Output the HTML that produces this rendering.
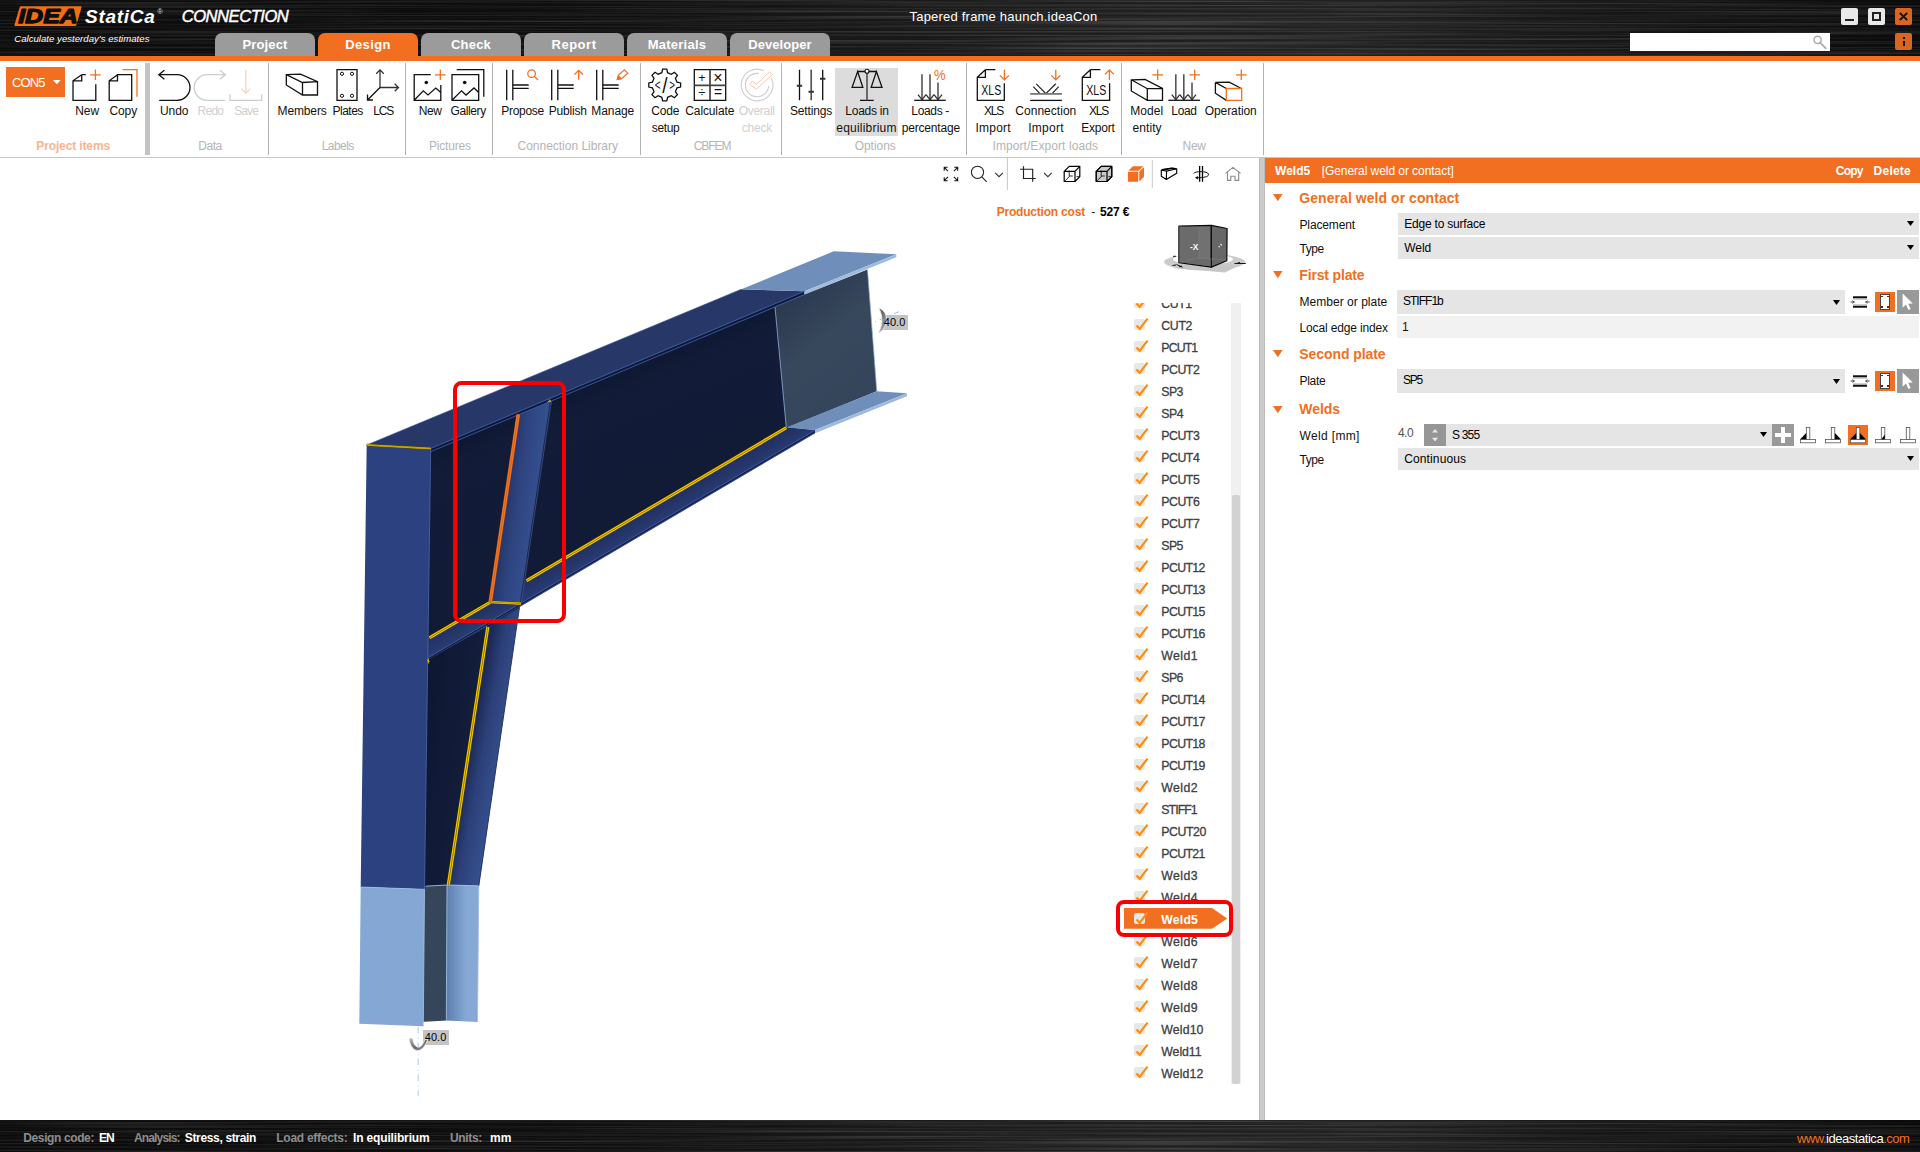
<!DOCTYPE html><html lang="en"><head><meta charset="utf-8"><title>IDEA StatiCa Connection - Tapered frame haunch.ideaCon</title><style>
html,body{margin:0;padding:0}
body{width:1920px;height:1152px;position:relative;overflow:hidden;background:#fff;font-family:"Liberation Sans",sans-serif;}
.abs,.ic,.tex,.t{position:absolute}
.abs>*{position:absolute}
.t{white-space:nowrap;display:block}
.ic{overflow:visible}
i{display:block}
</style></head><body><svg width="0" height="0" style="position:absolute"><defs>
<filter id="brush" x="0" y="0" width="100%" height="100%" color-interpolation-filters="sRGB">
<feTurbulence type="fractalNoise" baseFrequency="0.003 0.6" numOctaves="2" seed="7" result="n"></feTurbulence>
<feColorMatrix in="n" type="matrix" values="0 0 0 0 0  0 0 0 0 0  0 0 0 0 0  2.0 0 0 0 -0.8"></feColorMatrix>
<feComposite in2="SourceGraphic" operator="in" result="a"></feComposite>
<feFlood flood-color="#4e4e4e"></feFlood><feComposite in2="a" operator="in"></feComposite>
</filter></defs></svg><div id="header" class="abs" style="left:0;top:0;width:1920px;height:56px"><svg class="tex" width="1920" height="56" style="left:0;top:0"><defs><linearGradient id="hg" x1="0" x2="1" y1="0" y2="0"><stop offset="0" stop-color="#0b0b0b"></stop><stop offset="0.3" stop-color="#0f0f0f"></stop><stop offset="0.55" stop-color="#1d1d1d"></stop><stop offset="0.7" stop-color="#222"></stop><stop offset="0.86" stop-color="#141414"></stop><stop offset="1" stop-color="#0b0b0b"></stop></linearGradient><linearGradient id="hmg" x1="0" x2="1" y1="0" y2="0"><stop offset="0" stop-color="#fff" stop-opacity="0.5"></stop><stop offset="0.35" stop-color="#fff" stop-opacity="0.6"></stop><stop offset="0.6" stop-color="#fff" stop-opacity="1"></stop><stop offset="0.78" stop-color="#fff" stop-opacity="0.9"></stop><stop offset="1" stop-color="#fff" stop-opacity="0.45"></stop></linearGradient><mask id="hm" maskUnits="userSpaceOnUse" x="0" y="0" width="1920" height="56"><rect width="1920" height="56" fill="url(#hmg)"></rect></mask></defs><rect width="1920" height="56" fill="url(#hg)"></rect><g mask="url(#hm)"><rect width="1920" height="56" filter="url(#brush)"></rect></g></svg><svg class="ic" style="left:10.00px;top:4.00px;" width="80" height="24" viewBox="10 4 80 24"><path d="M21 6.3 H80.6 Q82 6.3 81.5 7.6 L76.4 24.9 Q76 26 74.8 26 H15.4 Q14 26 14.5 24.7 L19.6 7.4 Q20 6.3 21 6.3 Z" fill="#f26f0f"></path><text x="18.2" y="22.8" font-family="Liberation Sans, sans-serif" font-size="20.2" font-weight="700" font-style="italic" fill="#0d0d0d" stroke="#0d0d0d" stroke-width="1.25" stroke-linejoin="round" textLength="59.6" lengthAdjust="spacingAndGlyphs">IDEA</text></svg><span class="t" style="top: 4.52px; font-size: 19px; line-height: 23px; color: rgb(255, 255, 255); font-weight: 700; font-style: italic; left: 85px; letter-spacing: 0.733px;">StatiCa</span><span class="t" style="top:5.90px;font-size:7.5px;line-height:12px;color:#ddd;left:157.30px;">®</span><span class="t" style="top: 5.75px; font-size: 16.6px; line-height: 21px; color: rgb(255, 255, 255); font-style: italic; left: 181.7px; -webkit-text-stroke: 0.45px rgb(255, 255, 255); letter-spacing: -0.495px;">CONNECTION</span><span class="t" style="top: 31.77px; font-size: 9.6px; line-height: 14px; color: rgb(255, 255, 255); font-style: italic; left: 14.2px; letter-spacing: 0.022px;">Calculate yesterday's estimates</span><span class="t" style="top: 8px; font-size: 13px; line-height: 17px; color: rgb(255, 255, 255); left: 909.5px; letter-spacing: 0.21px;">Tapered frame haunch.ideaCon</span><div class="wb" style="left:1841.00px;top:8.00px;width:17.00px;height:17.00px;background:#e9e9e9;border-radius:2px;"><i style="position:absolute;left:4px;top:11px;width:9px;height:2px;background:#222"></i></div><div class="wb" style="left:1868.00px;top:8.00px;width:17.00px;height:17.00px;background:#e9e9e9;border-radius:2px;"><i style="position:absolute;left:4px;top:4px;width:5px;height:5px;border:2px solid #222"></i></div><div class="wb" style="left:1895.00px;top:8.00px;width:17.00px;height:17.00px;background:#d9661f;border-radius:2px;"><svg width="17" height="17" style="position:absolute;left:0;top:0"><path d="M4.8 4.8 L12.2 12.2 M12.2 4.8 L4.8 12.2" stroke="#111" stroke-width="1.9"></path></svg></div><div class="search" style="left:1630.00px;top:33.00px;width:200.00px;height:17.50px;background:#fff;"><svg width="20" height="18" style="position:absolute;left:180px;top:0"><circle cx="7.6" cy="6.8" r="3.6" fill="none" stroke="#aaa" stroke-width="1.5"></circle><path d="M10.2 9.6 L16.3 15.8" stroke="#aaa" stroke-width="1.7"></path></svg></div><div class="wb" style="left:1895.00px;top:33.00px;width:17.00px;height:17.00px;background:#d9661f;border-radius:2px;"><i style="position:absolute;left:7.5px;top:4px;width:2px;height:2px;background:#111"></i><i style="position:absolute;left:7.5px;top:7.5px;width:2px;height:5.5px;background:#111"></i></div><div class="tab" style="left:215.00px;top:33.00px;width:100.00px;height:23.00px;background:#9b9b9b;border-radius:7px 7px 0 0;"><span class="t" style="top: 2.6px; font-size: 13px; line-height: 17px; color: rgb(255, 255, 255); font-weight: 700; left: 50px; transform: translateX(-50%); letter-spacing: 0.132px;">Project</span></div><div class="tab" style="left:318.00px;top:33.00px;width:100.00px;height:23.00px;background:#f26f21;border-radius:7px 7px 0 0;"><span class="t" style="top: 2.6px; font-size: 13px; line-height: 17px; color: rgb(255, 255, 255); font-weight: 700; left: 50px; transform: translateX(-50%); letter-spacing: 0.359px;">Design</span></div><div class="tab" style="left:421.00px;top:33.00px;width:100.00px;height:23.00px;background:#9b9b9b;border-radius:7px 7px 0 0;"><span class="t" style="top: 2.6px; font-size: 13px; line-height: 17px; color: rgb(255, 255, 255); font-weight: 700; left: 50px; transform: translateX(-50%); letter-spacing: 0.194px;">Check</span></div><div class="tab" style="left:524.00px;top:33.00px;width:100.00px;height:23.00px;background:#9b9b9b;border-radius:7px 7px 0 0;"><span class="t" style="top: 2.6px; font-size: 13px; line-height: 17px; color: rgb(255, 255, 255); font-weight: 700; left: 50px; transform: translateX(-50%); letter-spacing: 0.518px;">Report</span></div><div class="tab" style="left:627.00px;top:33.00px;width:100.00px;height:23.00px;background:#9b9b9b;border-radius:7px 7px 0 0;"><span class="t" style="top: 2.6px; font-size: 13px; line-height: 17px; color: rgb(255, 255, 255); font-weight: 700; left: 50px; transform: translateX(-50%); letter-spacing: 0.236px;">Materials</span></div><div class="tab" style="left:730.00px;top:33.00px;width:100.00px;height:23.00px;background:#9b9b9b;border-radius:7px 7px 0 0;"><span class="t" style="top: 2.6px; font-size: 13px; line-height: 17px; color: rgb(255, 255, 255); font-weight: 700; left: 50px; transform: translateX(-50%); letter-spacing: 0.069px;">Developer</span></div></div><div class="abs" style="left:0.00px;top:56.00px;width:1920.00px;height:5.00px;background:#f26f21;"></div><div id="ribbon" class="abs" style="left:0;top:61px;width:1920px;height:96px;background:#fff"><div class="abs" style="left:835.00px;top:7.00px;width:63.00px;height:68.00px;background:#dcdcdc;"></div><svg class="ic" style="left:0.00px;top:0.00px;" width="1280" height="96" viewBox="0 61 1280 96"><path d="M81.7 74.7 L73 80.8 V100.3 H95.8 V84.2 M81.7 74.7 H85.8 M81.7 74.7 V80.8 H73" fill="none" stroke="#111" stroke-width="1.3"></path><path d="M95.4 69.5 V80.1 M90.10000000000001 74.8 H100.7" fill="none" stroke="#f26f21" stroke-width="1.3"></path><path d="M117.5 74.7 L109.2 80.8 V100.3 H131.7 V74.7 H117.5 V80.8 H109.2" fill="none" stroke="#111" stroke-width="1.3"></path><path d="M122.5 69.7 H137 V96.7" fill="none" stroke="#f26f21" stroke-width="1.3"></path><path d="M164.4 70.2 L158.8 74.7 L164.4 79.2 M158.8 74.7 H177.2 A12.8 12.8 0 0 1 177.2 100.3 H159.2" fill="none" stroke="#111" stroke-width="1.3"></path><path d="M219.8 70.2 L225.4 74.7 L219.8 79.2 M225.4 74.7 H207 A12.8 12.8 0 0 0 207 100.3 H225" fill="none" stroke="#cdcdcd" stroke-width="1.3"></path><path d="M230 94.2 V100.3 H261.7 V94.2" fill="none" stroke="#cdcdcd" stroke-width="1.3"></path><path d="M245.8 69.7 V93 M241.3 88.6 L245.8 93.3 L250.3 88.6" fill="none" stroke="#fbd3bb" stroke-width="1.3"></path><path d="M286.3 74.7 L300.5 74.2 L317.5 81.7 V95 H302.5 L286.3 85 Z M286.3 74.7 L302.5 82.5 L317.5 81.7 M302.5 82.5 V95" fill="none" stroke="#111" stroke-width="1.3"></path><path d="M337 69.7 H357 V100.3 H337 Z" fill="none" stroke="#111" stroke-width="1.3"></path><circle cx="342" cy="73.8" r="1.6" fill="none" stroke="#111" stroke-width="1"></circle><circle cx="342" cy="95.8" r="1.6" fill="none" stroke="#111" stroke-width="1"></circle><circle cx="352" cy="73.8" r="1.6" fill="none" stroke="#111" stroke-width="1"></circle><circle cx="352" cy="95.8" r="1.6" fill="none" stroke="#111" stroke-width="1"></circle><path d="M380 69.9 V87.5 H398.5 M376.2 73.7 L380 69.9 L383.8 73.7 M394.7 83.7 L398.5 87.5 L394.7 91.3" fill="none" stroke="#333" stroke-width="1.3"></path><path d="M380 87.5 L367.5 100 M367.5 94.6 V100 H372.9" fill="none" stroke="#111" stroke-width="1.3"></path><path d="M430.8 74.7 H414.2 V100.3 H440.8 V85 M414.4 100 L423.3 90.8 L428 95 L435.8 88 L440.8 92.5" fill="none" stroke="#111" stroke-width="1.3"></path><circle cx="426.3" cy="82.5" r="1.8" fill="#111"></circle><path d="M440.3 69.5 V80.1 M435.0 74.8 H445.6" fill="none" stroke="#f26f21" stroke-width="1.3"></path><path d="M452 74.7 H478.7 V100.3 H452 Z M452.2 100 L461.5 90.8 L466 95 L474 88 L478.7 92.5 M456.7 69.7 H483.8 V96.7" fill="none" stroke="#111" stroke-width="1.3"></path><circle cx="464.7" cy="82.5" r="1.8" fill="#111"></circle><path d="M506.7 69.7 V100.3 M512.8 69.7 V100.3 M512.8 85 H528.7 M512.8 88.4 H528.7" fill="none" stroke="#111" stroke-width="1.3"></path><circle cx="531.6" cy="73.7" r="3.8" fill="none" stroke="#f26f21" stroke-width="1.3"></circle><path d="M534.3 76.4 L538 80" fill="none" stroke="#f26f21" stroke-width="1.3"></path><path d="M551.7 69.7 V100.3 M557.8 69.7 V100.3 M557.8 85 H573.7 M557.8 88.4 H573.7" fill="none" stroke="#111" stroke-width="1.3"></path><path d="M578.7 79.7 V70.3 M574.5 74.5 L578.7 70.3 L582.9000000000001 74.5" fill="none" stroke="#f26f21" stroke-width="1.3"></path><path d="M596.7 69.7 V100.3 M602.8 69.7 V100.3 M602.8 85 H618.7 M602.8 88.4 H618.7" fill="none" stroke="#111" stroke-width="1.3"></path><path d="M617.2 79.6 L618.4 75.4 L624.4 69.8 L627.8 73.2 L621.6 78.8 Z" fill="none" stroke="#f26f21" stroke-width="1.2"></path><path d="M617.2 79.6 L618.4 75.4 L621.6 78.8 Z" fill="#f26f21" stroke="#f26f21" stroke-width="0.8"></path><path d="M677.0 82.1 L680.6 82.9 L680.6 87.1 L677.0 87.9 L675.4 91.6 L677.4 94.7 L674.4 97.7 L671.3 95.7 L667.6 97.3 L666.8 100.9 L662.6 100.9 L661.8 97.3 L658.1 95.7 L655.0 97.7 L652.0 94.7 L654.0 91.6 L652.4 87.9 L648.8 87.1 L648.8 82.9 L652.4 82.1 L654.0 78.4 L652.0 75.3 L655.0 72.3 L658.1 74.3 L661.8 72.7 L662.6 69.1 L666.8 69.1 L667.6 72.7 L671.3 74.3 L674.4 72.3 L677.4 75.3 L675.4 78.4 Z" fill="none" stroke="#111" stroke-width="1.3"></path><g font-family="Liberation Sans, sans-serif" fill="#111"><text x="654.8" y="90.4" font-size="15" textLength="5.8" lengthAdjust="spacingAndGlyphs">&lt;</text><text x="662.3" y="92.6" font-size="22" textLength="5.3" lengthAdjust="spacingAndGlyphs">/</text><text x="669.3" y="90.4" font-size="15" textLength="5.8" lengthAdjust="spacingAndGlyphs">&gt;</text></g><path d="M694.3 69.7 H725.7 V100.3 H694.3 Z" fill="none" stroke="#111" stroke-width="1.3"></path><path d="M710 69.7 V100.3 M694.3 85.3 H725.7" fill="none" stroke="#444" stroke-width="1.7"></path><text x="702" y="81.6" text-anchor="middle" font-family="Liberation Sans, sans-serif" font-size="12.5" fill="#111">+</text><text x="718" y="82.6" text-anchor="middle" font-family="Liberation Sans, sans-serif" font-size="16" fill="#111">×</text><text x="702" y="97.2" text-anchor="middle" font-family="Liberation Sans, sans-serif" font-size="12.5" fill="#111">÷</text><text x="718" y="97.4" text-anchor="middle" font-family="Liberation Sans, sans-serif" font-size="14" fill="#111">=</text><path d="M771.4 78.3 A15.8 15.8 0 1 1 763.8 70.7 M768.75 86 A11.7 11.7 0 1 1 759.1 73.5" fill="none" stroke="#cfcfcf" stroke-width="1.15"></path><path d="M749.6 84 L756.3 89.2 L772.5 74.6 L769.6 71.7 L756.7 84.2 L752.5 81.3 Z" fill="#fff" stroke="#fbc6a8" stroke-width="0.95" stroke-linejoin="round"></path><path d="M799.5 69.7 V100.3 M822.7 69.7 V100.3" fill="none" stroke="#111" stroke-width="1.3"></path><path d="M811.2 69.7 V100.3" fill="none" stroke="#555" stroke-width="1.7"></path><path d="M796.8 85.8 H802.2 M808.5 91.7 H813.9 M820 78.8 H825.4" fill="none" stroke="#333" stroke-width="2"></path><path d="M857.6 71.6 L852.1 87.3 H862.8 Z M876.4 71.6 L871.2 87.3 H882 Z M857.2 71.5 H876.8 M860 100.4 H873.7" fill="none" stroke="#111" stroke-width="1.3"></path><path d="M867 73.3 V100.3" fill="none" stroke="#555" stroke-width="1.7"></path><circle cx="867" cy="71.3" r="2" fill="#fff" stroke="#111" stroke-width="1.1"></circle><path d="M922 74.2 V99.4" fill="none" stroke="#555" stroke-width="1.6"></path><path d="M918 94.6 L922 99.6 L926 94.6" fill="none" stroke="#333" stroke-width="1.3"></path><path d="M930 74.2 V99.4" fill="none" stroke="#555" stroke-width="1.6"></path><path d="M926 94.6 L930 99.6 L934 94.6" fill="none" stroke="#333" stroke-width="1.3"></path><path d="M938 82.5 V99.4" fill="none" stroke="#555" stroke-width="1.6"></path><path d="M934 94.6 L938 99.6 L942 94.6" fill="none" stroke="#333" stroke-width="1.3"></path><path d="M914.2 100.3 H945.8" fill="none" stroke="#111" stroke-width="1.3"></path><text x="934" y="80" font-family="Liberation Sans, sans-serif" font-size="14.6" fill="#f26f21" textLength="11.6" lengthAdjust="spacingAndGlyphs">%</text><path d="M985.4 69.7 L977.3 77.4 V100.4 H1004.3 V83.2 M985.4 69.7 H995.4 M985.4 69.7 V77.4 H977.3" fill="none" stroke="#111" stroke-width="1.3"></path><text x="981.2" y="94.6" font-family="Liberation Sans, sans-serif" font-size="14" fill="#111" textLength="20" lengthAdjust="spacingAndGlyphs">XLS</text><path d="M1004.4 69.7 V79.9 M999.9 75.4 L1004.4 79.9 L1008.9 75.4" fill="none" stroke="#f26f21" stroke-width="1.3"></path><path d="M1036.3 83.8 L1045.8 93.7 L1055.8 83.8 M1033.3 86.6 L1040 93.7 M1058.7 86.6 L1052.1 93.7" fill="none" stroke="#222" stroke-width="1.2"></path><path d="M1030.2 93.9 H1061.9" fill="none" stroke="#777" stroke-width="1.8"></path><path d="M1030.2 100.4 H1061.9" fill="none" stroke="#111" stroke-width="1.3"></path><path d="M1055.8 69.7 V79.9 M1051.3 75.4 L1055.8 79.9 L1060.3 75.4" fill="none" stroke="#f26f21" stroke-width="1.3"></path><path d="M1090.4 69.7 L1082.3 77.4 V100.4 H1109.6 V83.2 M1090.4 69.7 H1100.4 M1090.4 69.7 V77.4 H1082.3" fill="none" stroke="#111" stroke-width="1.3"></path><text x="1086.2" y="94.6" font-family="Liberation Sans, sans-serif" font-size="14" fill="#111" textLength="20" lengthAdjust="spacingAndGlyphs">XLS</text><path d="M1109.4 79.9 V69.9 M1104.9 74.4 L1109.4 69.9 L1113.9 74.4" fill="none" stroke="#f26f21" stroke-width="1.3"></path><path d="M1131.3 79.8 L1145 79.5 L1162.5 88.5 V100.4 H1147.3 L1131.3 91 Z M1131.3 79.8 L1147.3 88.7 L1162.5 88.5 M1147.3 88.7 V100.4" fill="none" stroke="#111" stroke-width="1.3"></path><path d="M1157.7 69.5 V80.1 M1152.4 74.8 H1163.0" fill="none" stroke="#f26f21" stroke-width="1.3"></path><path d="M1175.8 74.2 V99.4" fill="none" stroke="#555" stroke-width="1.6"></path><path d="M1171.8 94.6 L1175.8 99.6 L1179.8 94.6" fill="none" stroke="#333" stroke-width="1.3"></path><path d="M1183.8 74.2 V99.4" fill="none" stroke="#555" stroke-width="1.6"></path><path d="M1179.8 94.6 L1183.8 99.6 L1187.8 94.6" fill="none" stroke="#333" stroke-width="1.3"></path><path d="M1192 82.5 V99.4" fill="none" stroke="#555" stroke-width="1.6"></path><path d="M1188 94.6 L1192 99.6 L1196 94.6" fill="none" stroke="#333" stroke-width="1.3"></path><path d="M1168.3 100.3 H1200" fill="none" stroke="#111" stroke-width="1.3"></path><path d="M1194.7 69.5 V80.1 M1189.4 74.8 H1200.0" fill="none" stroke="#f26f21" stroke-width="1.3"></path><path d="M1215.4 82.4 L1229.2 82.2 L1241.3 88.5 M1215.4 82.4 V93.2 L1226.3 100.4 M1215.4 82.4 L1226.3 88.5" fill="none" stroke="#111" stroke-width="1.3"></path><path d="M1226.3 88.5 H1241.7 V100.4 H1226.3 Z" fill="none" stroke="#f26f21" stroke-width="1.3"></path><path d="M1241.3 69.5 V80.1 M1236.0 74.8 H1246.6" fill="none" stroke="#f26f21" stroke-width="1.3"></path></svg><div class="abs" style="left:6.00px;top:6.00px;width:59.00px;height:30.00px;background:#f26f21;"><span class="t" style="top: 6.8px; font-size: 13px; line-height: 17px; color: rgb(255, 255, 255); left: 6px; letter-spacing: -0.906px;">CON5</span><svg width="8" height="5" style="position:absolute;left:47.3px;top:13.2px"><path d="M0 0 H7.6 L3.8 4.2 Z" fill="#fff"></path></svg></div><span class="t" style="top: 41.54px; font-size: 12px; line-height: 16px; color: rgb(17, 17, 17); left: 75.3px; letter-spacing: -0.105px;">New</span><span class="t" style="top: 41.54px; font-size: 12px; line-height: 16px; color: rgb(17, 17, 17); left: 109.5px; letter-spacing: -0.129px;">Copy</span><span class="t" style="top: 41.54px; font-size: 12px; line-height: 16px; color: rgb(17, 17, 17); left: 160px; letter-spacing: -0.097px;">Undo</span><span class="t" style="top: 41.54px; font-size: 12px; line-height: 16px; color: rgb(207, 207, 207); left: 197.5px; letter-spacing: -0.722px;">Redo</span><span class="t" style="top: 41.54px; font-size: 12px; line-height: 16px; color: rgb(207, 207, 207); left: 234.2px; letter-spacing: -0.89px;">Save</span><span class="t" style="top: 41.54px; font-size: 12px; line-height: 16px; color: rgb(17, 17, 17); left: 277.5px; letter-spacing: -0.117px;">Members</span><span class="t" style="top: 41.54px; font-size: 12px; line-height: 16px; color: rgb(17, 17, 17); left: 332.5px; letter-spacing: -0.51px;">Plates</span><span class="t" style="top: 41.54px; font-size: 12px; line-height: 16px; color: rgb(17, 17, 17); left: 373.3px; letter-spacing: -1.2px;">LCS</span><span class="t" style="top: 41.54px; font-size: 12px; line-height: 16px; color: rgb(17, 17, 17); left: 418.7px; letter-spacing: -0.339px;">New</span><span class="t" style="top: 41.54px; font-size: 12px; line-height: 16px; color: rgb(17, 17, 17); left: 450.5px; letter-spacing: -0.388px;">Gallery</span><span class="t" style="top: 41.54px; font-size: 12px; line-height: 16px; color: rgb(17, 17, 17); left: 501.3px; letter-spacing: -0.315px;">Propose</span><span class="t" style="top: 41.54px; font-size: 12px; line-height: 16px; color: rgb(17, 17, 17); left: 548.7px; letter-spacing: -0.194px;">Publish</span><span class="t" style="top: 41.54px; font-size: 12px; line-height: 16px; color: rgb(17, 17, 17); left: 591.3px; letter-spacing: -0.079px;">Manage</span><span class="t" style="top: 41.54px; font-size: 12px; line-height: 16px; color: rgb(17, 17, 17); left: 651.3px; letter-spacing: -0.197px;">Code</span><span class="t" style="top: 58.54px; font-size: 12px; line-height: 16px; color: rgb(17, 17, 17); left: 651.7px; letter-spacing: -0.312px;">setup</span><span class="t" style="top: 41.54px; font-size: 12px; line-height: 16px; color: rgb(17, 17, 17); left: 685.3px; letter-spacing: -0.126px;">Calculate</span><span class="t" style="top: 41.54px; font-size: 12px; line-height: 16px; color: rgb(207, 207, 207); left: 738.7px; letter-spacing: -0.288px;">Overall</span><span class="t" style="top: 58.54px; font-size: 12px; line-height: 16px; color: rgb(207, 207, 207); left: 741.7px; letter-spacing: -0.212px;">check</span><span class="t" style="top: 41.54px; font-size: 12px; line-height: 16px; color: rgb(17, 17, 17); left: 790px; letter-spacing: -0.17px;">Settings</span><span class="t" style="top: 41.54px; font-size: 12px; line-height: 16px; color: rgb(17, 17, 17); left: 845.3px; letter-spacing: -0.247px;">Loads in</span><span class="t" style="top: 58.54px; font-size: 12px; line-height: 16px; color: rgb(17, 17, 17); left: 836.3px; letter-spacing: 0.215px;">equilibrium</span><span class="t" style="top: 41.54px; font-size: 12px; line-height: 16px; color: rgb(17, 17, 17); left: 911.3px; letter-spacing: -0.333px;">Loads -</span><span class="t" style="top: 58.54px; font-size: 12px; line-height: 16px; color: rgb(17, 17, 17); left: 901.7px; letter-spacing: -0.175px;">percentage</span><span class="t" style="top: 41.54px; font-size: 12px; line-height: 16px; color: rgb(17, 17, 17); left: 984px; letter-spacing: -1.2px;">XLS</span><span class="t" style="top: 58.54px; font-size: 12px; line-height: 16px; color: rgb(17, 17, 17); left: 975.5px; letter-spacing: 0.214px;">Import</span><span class="t" style="top: 41.54px; font-size: 12px; line-height: 16px; color: rgb(17, 17, 17); left: 1015.3px; letter-spacing: 0.028px;">Connection</span><span class="t" style="top: 58.54px; font-size: 12px; line-height: 16px; color: rgb(17, 17, 17); left: 1028.3px; letter-spacing: 0.231px;">Import</span><span class="t" style="top: 41.54px; font-size: 12px; line-height: 16px; color: rgb(17, 17, 17); left: 1089px; letter-spacing: -1.2px;">XLS</span><span class="t" style="top: 58.54px; font-size: 12px; line-height: 16px; color: rgb(17, 17, 17); left: 1081.3px; letter-spacing: -0.215px;">Export</span><span class="t" style="top: 41.54px; font-size: 12px; line-height: 16px; color: rgb(17, 17, 17); left: 1130.3px; letter-spacing: 0.063px;">Model</span><span class="t" style="top: 58.54px; font-size: 12px; line-height: 16px; color: rgb(17, 17, 17); left: 1132.5px; letter-spacing: 0.085px;">entity</span><span class="t" style="top: 41.54px; font-size: 12px; line-height: 16px; color: rgb(17, 17, 17); left: 1171.3px; letter-spacing: -0.326px;">Load</span><span class="t" style="top: 41.54px; font-size: 12px; line-height: 16px; color: rgb(17, 17, 17); left: 1204.7px; letter-spacing: -0.078px;">Operation</span><span class="t" style="top: 76.54px; font-size: 12px; line-height: 16px; color: rgb(247, 181, 143); font-weight: 700; left: 36.3px; letter-spacing: -0.129px;">Project items</span><span class="t" style="top: 76.54px; font-size: 12px; line-height: 16px; color: rgb(180, 180, 180); left: 198.3px; letter-spacing: -0.49px;">Data</span><span class="t" style="top: 76.54px; font-size: 12px; line-height: 16px; color: rgb(180, 180, 180); left: 321.7px; letter-spacing: -0.563px;">Labels</span><span class="t" style="top: 76.54px; font-size: 12px; line-height: 16px; color: rgb(180, 180, 180); left: 429px; letter-spacing: -0.195px;">Pictures</span><span class="t" style="top: 76.54px; font-size: 12px; line-height: 16px; color: rgb(180, 180, 180); left: 517.5px; letter-spacing: -0.013px;">Connection Library</span><span class="t" style="top: 76.54px; font-size: 12px; line-height: 16px; color: rgb(180, 180, 180); left: 693.7px; letter-spacing: -1.04px;">CBFEM</span><span class="t" style="top: 76.54px; font-size: 12px; line-height: 16px; color: rgb(180, 180, 180); left: 854.7px; letter-spacing: -0.037px;">Options</span><span class="t" style="top: 76.54px; font-size: 12px; line-height: 16px; color: rgb(180, 180, 180); left: 992.5px; letter-spacing: 0.076px;">Import/Export loads</span><span class="t" style="top: 76.54px; font-size: 12px; line-height: 16px; color: rgb(180, 180, 180); left: 1182.5px; letter-spacing: -0.239px;">New</span><div class="abs" style="left:268.00px;top:2.00px;width:1.00px;height:92.00px;background:#b2b2b2;"></div><div class="abs" style="left:405.00px;top:2.00px;width:1.00px;height:92.00px;background:#b2b2b2;"></div><div class="abs" style="left:492.00px;top:2.00px;width:1.00px;height:92.00px;background:#b2b2b2;"></div><div class="abs" style="left:640.00px;top:2.00px;width:1.00px;height:92.00px;background:#b2b2b2;"></div><div class="abs" style="left:781.00px;top:2.00px;width:1.00px;height:92.00px;background:#b2b2b2;"></div><div class="abs" style="left:966.00px;top:2.00px;width:1.00px;height:92.00px;background:#b2b2b2;"></div><div class="abs" style="left:1121.00px;top:2.00px;width:1.00px;height:92.00px;background:#b2b2b2;"></div><div class="abs" style="left:1263.00px;top:2.00px;width:1.00px;height:92.00px;background:#b2b2b2;"></div><div class="abs" style="left:145.00px;top:2.00px;width:4.70px;height:92.00px;background:#c4c4c4;"></div></div><div class="abs" style="left:0.00px;top:157.00px;width:1920.00px;height:1.00px;background:#c6c6c6;"></div><div id="view" class="abs" style="left:0;top:158px;width:1259px;height:962px;background:#fff;overflow:hidden"><svg class="ic model" style="left:330.00px;top:72.00px;" width="600" height="870" viewBox="330 230 600 870"><defs><linearGradient id="gst" gradientUnits="userSpaceOnUse" x1="500" y1="500" x2="538" y2="505"><stop offset="0" stop-color="#212e5f"></stop><stop offset="0.45" stop-color="#2e4480"></stop><stop offset="1" stop-color="#36508f"></stop></linearGradient><linearGradient id="gha" gradientUnits="userSpaceOnUse" x1="470" y1="750" x2="502" y2="756"><stop offset="0" stop-color="#1d2a57"></stop><stop offset="0.4" stop-color="#2c4079"></stop><stop offset="1" stop-color="#35508e"></stop></linearGradient><linearGradient id="ghl" gradientUnits="userSpaceOnUse" x1="447" y1="950" x2="478" y2="950"><stop offset="0" stop-color="#5f80ae"></stop><stop offset="0.6" stop-color="#84a7d4"></stop><stop offset="1" stop-color="#86a9d6"></stop></linearGradient><linearGradient id="gbf" gradientUnits="userSpaceOnUse" x1="600" y1="538" x2="611" y2="557"><stop offset="0" stop-color="#213063"></stop><stop offset="0.5" stop-color="#26376c"></stop><stop offset="1" stop-color="#2b3f78"></stop></linearGradient><linearGradient id="gwb" gradientUnits="userSpaceOnUse" x1="600" y1="380" x2="660" y2="520"><stop offset="0" stop-color="#0f1832"></stop><stop offset="0.15" stop-color="#121c38"></stop><stop offset="1" stop-color="#111b36"></stop></linearGradient><linearGradient id="ggw" gradientUnits="userSpaceOnUse" x1="790" y1="300" x2="870" y2="400"><stop offset="0" stop-color="#2c3a50"></stop><stop offset="0.4" stop-color="#37475c"></stop><stop offset="1" stop-color="#34445a"></stop></linearGradient><linearGradient id="gcw" gradientUnits="userSpaceOnUse" x1="428" y1="760" x2="470" y2="765"><stop offset="0" stop-color="#0f1833"></stop><stop offset="1" stop-color="#131e3c"></stop></linearGradient></defs><polygon points="366.7,445 741.3,289.3 805,291.3 430.7,449.2" fill="#273868"></polygon><polygon points="741.3,289.3 833.8,251.3 896.3,254.3 804.5,291.3" fill="#6f8fba"></polygon><polygon points="426,450.5 804.5,291.1 804.5,294.6 426,453.8" fill="#0f1834"></polygon><polygon points="804.5,291.3 896.3,254.3 896.3,257.2 804.5,294.6" fill="#9dbbe0"></polygon><polygon points="424,451.8 430.2,450 776,306.4 787,428 424,641" fill="url(#gwb)"></polygon><polygon points="775,306.2 867.5,269.4 876.8,391.3 786.3,428" fill="url(#ggw)"></polygon><line x1="775" y1="307" x2="786.3" y2="427.5" stroke="#8fb0dd" stroke-width="0.8"></line><line x1="867.5" y1="270" x2="876.8" y2="391.3" stroke="#8fb0dd" stroke-width="0.7"></line><polygon points="424,640.5 786.3,427 815,430 815,433.2 424,663" fill="url(#gbf)"></polygon><polygon points="786.3,427.5 876.8,391.3 907,393.3 815,430" fill="#6f8fba"></polygon><polygon points="815,430 907,393.3 907,396.2 815,433.2" fill="#9dbbe0"></polygon><line x1="428.7" y1="657.3" x2="815" y2="430.2" stroke="#3c5ca8" stroke-width="0.8"></line><line x1="428.7" y1="658.7" x2="815" y2="431.6" stroke="#0e1631" stroke-width="1.0"></line><line x1="428.7" y1="660" x2="815" y2="432.9" stroke="#35539c" stroke-width="0.8"></line><polygon points="422,662 428.7,659.5 488.5,625.2 449,886 420,887" fill="url(#gcw)"></polygon><polygon points="487.5,625.6 519.5,606.8 478.8,886.3 447.5,886" fill="url(#gha)"></polygon><polygon points="420,886.3 447.6,885 446.9,1020.5 420,1022" fill="#35455a"></polygon><polygon points="447,885 478.8,885.8 477.5,1022 446.3,1020.5" fill="url(#ghl)"></polygon><polygon points="366.7,445 430.7,448.5 424.5,889.3 360.7,887" fill="#2b4180"></polygon><polygon points="360.7,887 424.5,889.3 423.3,1026.3 359.3,1023.8" fill="#84a7d4"></polygon><line x1="430.7" y1="448.5" x2="424.5" y2="889.3" stroke="#4c68ac" stroke-width="0.8"></line><line x1="424.5" y1="889.3" x2="423.3" y2="1026.3" stroke="#a9c6ea" stroke-width="0.8"></line><line x1="447" y1="885" x2="446.3" y2="1020.5" stroke="#a9c6ea" stroke-width="0.8"></line><line x1="478.8" y1="885.8" x2="477.5" y2="1022" stroke="#9cbbe2" stroke-width="0.8"></line><line x1="360.7" y1="887" x2="424.5" y2="889.3" stroke="#9fc0ea" stroke-width="0.7"></line><line x1="425.8" y1="886.2" x2="447" y2="885" stroke="#9fc0ea" stroke-width="0.9"></line><line x1="447" y1="885" x2="478.8" y2="885.8" stroke="#a5c5ee" stroke-width="0.9"></line><polygon points="518,414.5 550.7,401.3 520.5,603.3 490,602" fill="url(#gst)"></polygon><line x1="550.7" y1="401.3" x2="520.5" y2="603.3" stroke="#16234d" stroke-width="1.3"></line><line x1="551.4" y1="401.3" x2="521.2" y2="603.3" stroke="#4b67aa" stroke-width="0.6"></line><line x1="366.7" y1="445" x2="741.3" y2="289.3" stroke="#3a5192" stroke-width="0.6"></line><line x1="430.7" y1="448.5" x2="804.5" y2="291.3" stroke="#3f60ae" stroke-width="0.9"></line><line x1="430.7" y1="451.7" x2="804.5" y2="294.5" stroke="#3a5aa8" stroke-width="0.9"></line><line x1="487.5" y1="626" x2="519.5" y2="607.2" stroke="#0f1836" stroke-width="0.8"></line><line x1="519.5" y1="607.2" x2="478.8" y2="885.8" stroke="#1b2a56" stroke-width="0.9"></line><line x1="366.7" y1="445" x2="430.7" y2="448.5" stroke="#5d4800" stroke-width="2.3"></line><line x1="366.7" y1="445" x2="430.7" y2="448.5" stroke="#f7cc00" stroke-width="1.7"></line><line x1="366.7" y1="445" x2="430.7" y2="448.5" stroke="#8f6f00" stroke-width="0.51"></line><line x1="429.5" y1="637.8" x2="490.3" y2="602.2" stroke="#5d4800" stroke-width="3.6"></line><line x1="429.5" y1="637.8" x2="490.3" y2="602.2" stroke="#f7cc00" stroke-width="3.0"></line><line x1="429.5" y1="637.8" x2="490.3" y2="602.2" stroke="#8f6f00" stroke-width="0.8999999999999999"></line><line x1="526.5" y1="580.8" x2="786.3" y2="427.8" stroke="#5d4800" stroke-width="3.6"></line><line x1="526.5" y1="580.8" x2="786.3" y2="427.8" stroke="#f7cc00" stroke-width="3.0"></line><line x1="526.5" y1="580.8" x2="786.3" y2="427.8" stroke="#8f6f00" stroke-width="0.8999999999999999"></line><line x1="490.3" y1="602.2" x2="521" y2="603.6" stroke="#5d4800" stroke-width="2.8000000000000003"></line><line x1="490.3" y1="602.2" x2="521" y2="603.6" stroke="#f7cc00" stroke-width="2.2"></line><line x1="490.3" y1="602.2" x2="521" y2="603.6" stroke="#8f6f00" stroke-width="0.66"></line><line x1="487.8" y1="627" x2="448.3" y2="885" stroke="#5d4800" stroke-width="3.6"></line><line x1="487.8" y1="627" x2="448.3" y2="885" stroke="#f7cc00" stroke-width="3.0"></line><line x1="487.8" y1="627" x2="448.3" y2="885" stroke="#8f6f00" stroke-width="0.8999999999999999"></line><line x1="518.3" y1="414.5" x2="490.3" y2="602" stroke="#b94e18" stroke-width="3.9"></line><line x1="518.3" y1="414.5" x2="490.3" y2="602" stroke="#f47a25" stroke-width="3"></line><line x1="518.3" y1="414.5" x2="490.3" y2="602" stroke="#d9651c" stroke-width="1.2"></line><path d="M547.5 401.8 L550.5 400.6 M549.3 399.5 L550.8 402.3" fill="none" stroke="#f2c400" stroke-width="0.9"></path><path d="M428.3 658.5 V663.5 M427.2 660.5 L429.6 661.5" fill="none" stroke="#f2c400" stroke-width="0.9"></path></svg><svg class="ic" style="left:930.00px;top:0.00px;" width="329" height="125" viewBox="930 158 329 125"><path d="M944.2 170.70000000000002 V167.3 H947.6 M944.2 167.3 L948.0 171.10000000000002" fill="none" stroke="#111" stroke-width="1.05"></path><path d="M957.7 170.70000000000002 V167.3 H954.3000000000001 M957.7 167.3 L953.9000000000001 171.10000000000002" fill="none" stroke="#111" stroke-width="1.05"></path><path d="M944.2 177.29999999999998 V180.7 H947.6 M944.2 180.7 L948.0 176.89999999999998" fill="none" stroke="#111" stroke-width="1.05"></path><path d="M957.7 177.29999999999998 V180.7 H954.3000000000001 M957.7 180.7 L953.9000000000001 176.89999999999998" fill="none" stroke="#111" stroke-width="1.05"></path><circle cx="977.5" cy="172.3" r="6.1" fill="none" stroke="#222" stroke-width="1.05"></circle><path d="M981.8 176.8 L986.7 181.8" fill="none" stroke="#222" stroke-width="1.1"></path><path d="M995.2 172.9 L999 176.7 L1002.9 172.9" fill="none" stroke="#333" stroke-width="1.1"></path><path d="M1007.4 158 V190" fill="none" stroke="#c8c8c8" stroke-width="1"></path><path d="M1023.5 166.3 V178.5 H1035.8 M1020 169.2 H1032.7 V181.8" fill="none" stroke="#222" stroke-width="1.15"></path><path d="M1044 172.9 L1047.9 176.7 L1051.8 172.9" fill="none" stroke="#333" stroke-width="1.1"></path><path d="M1064.2 171.3 H1075.0 V181.5 H1064.2 Z M1064.2 171.3 L1069.2 166.3 H1079.8 V176.7 L1075.0 181.5 M1075.0 171.3 L1079.8 166.3" fill="none" stroke="#000" stroke-width="1.2" stroke-linejoin="round"></path><path d="M1069.2 170.6 V176.7 M1069.2 176.7 L1064.8 181 M1069.2 176 H1072.8 M1076.4 176.7 H1079.8" fill="none" stroke="#000" stroke-width="0.8"></path><path d="M1096.2 171.3 L1101.2 166.3 H1111.8 V176.7 L1107.0 181.5 H1096.2 Z" fill="#cbcbcb" stroke="#000" stroke-width="1"></path><path d="M1096.2 171.3 H1107.0 V181.5 H1096.2 Z M1096.2 171.3 L1101.2 166.3 H1111.8 V176.7 L1107.0 181.5 M1107.0 171.3 L1111.8 166.3" fill="none" stroke="#000" stroke-width="1.2" stroke-linejoin="round"></path><path d="M1101.2 170.6 V176.7 M1101.2 176.7 L1096.8 181 M1101.2 176 H1104.8 M1108.4 176.7 H1111.8" fill="none" stroke="#000" stroke-width="0.8"></path><path d="M1127.9 171.8 H1138.3 V181.8 H1127.9 Z M1128.4 170.8 L1132.9 166.2 H1143.3 L1138.6 170.8 Z M1139.3 171.6 L1144 166.9 V176.8 L1139.3 181.6 Z" fill="#f26f21"></path><path d="M1152.3 160 V188" fill="none" stroke="#c8c8c8" stroke-width="1"></path><path d="M1161.3 170 L1171.7 168.2 L1176.7 168.8 V173.3 L1166.3 179.6 L1161.3 176.3 Z M1161.3 170 L1166.6 171.1 L1176.7 168.8 M1166.6 171.1 L1166.3 179.6" fill="none" stroke="#000" stroke-width="1.15" stroke-linejoin="round"></path><path d="M1162 169.9 L1171.7 168.3 L1176 168.8" fill="none" stroke="#000" stroke-width="1.6"></path><path d="M1199.6 166 V181.8 M1202.5 166 V181.8" fill="none" stroke="#000" stroke-width="1.3"></path><path d="M1193.6 173.6 C1194.6 170.9 1207.6 170.9 1208.4 174 C1209.4 176.6 1204 177.8 1197.6 177.7" fill="none" stroke="#111" stroke-width="1"></path><path d="M1195 177.7 L1197.9 175.9 V179.6 Z" fill="#000"></path><path d="M1225.6 173.4 L1232.9 167.4 L1240.6 173.4 M1227.5 172.6 V180.4 H1230.8 V176.2 H1235 V180.4 H1238.7 V172.6" fill="none" stroke="#8c8c8c" stroke-width="1.15"></path><ellipse cx="1204.5" cy="262" rx="40.5" ry="8.3" fill="#cbcbcb"></ellipse><ellipse cx="1203" cy="259.3" rx="30" ry="5.4" fill="#fff"></ellipse><path d="M1172 268 L1225 272.5 L1238 266 L1200 262 Z" fill="#c6c6c6"></path><polygon points="1178.9,226.2 1211.3,225.3 1211.3,267.1 1178.9,262.6" fill="#717171" stroke="#0a0a0a" stroke-width="1.2" stroke-linejoin="round"></polygon><polygon points="1211.3,225.3 1227.1,228.5 1226.8,260.8 1211.3,267.1" fill="#676767" stroke="#0a0a0a" stroke-width="1.2" stroke-linejoin="round"></polygon><polygon points="1179.5,226.6 1199,228.7 1199,258 1179.5,262" fill="#6b6b6b"></polygon><polygon points="1179.5,262.2 1199,258 1210.7,259.5 1210.7,266.3" fill="#6a6a6a"></polygon><path d="M1199 228.7 V258 L1179.5 262 M1199 258 L1226 260" fill="none" stroke="#7d7d7d" stroke-width="0.6"></path><text x="1190" y="250" font-family="Liberation Sans, sans-serif" font-size="9.6" font-weight="700" fill="#fff" textLength="8.4" lengthAdjust="spacingAndGlyphs">-X</text><path d="M1218.5 246.8 H1220 M1220.6 243.8 L1221.6 245.6" fill="none" stroke="#fff" stroke-width="1.1"></path><path d="M1173 256.3 H1176 M1172.5 265.5 L1176 265 M1176.5 264.5 L1182.5 267.3 M1179 266.8 L1182 266" fill="none" stroke="#000" stroke-width="0.9"></path><path d="M1234.5 263.5 H1245.8 M1237.5 263 L1240 262.5" fill="none" stroke="#000" stroke-width="0.9"></path></svg><span class="t" style="top: 45.64px; font-size: 12px; line-height: 16px; color: rgb(242, 111, 33); font-weight: 700; left: 996.7px; letter-spacing: -0.203px;">Production cost</span><span class="t" style="top:45.64px;font-size:12px;line-height:16px;color:#111;left:1091.30px;">-</span><span class="t" style="top: 45.64px; font-size: 12px; line-height: 16px; color: rgb(0, 0, 0); font-weight: 700; left: 1100px; letter-spacing: -0.166px;">527 €</span><div class="abs" style="left:423.00px;top:872.10px;width:25.80px;height:14.60px;background:#c4c4c4;"><span class="t" style="top: -0.41px; font-size: 11px; line-height: 15px; color: rgb(0, 0, 0); left: 1.8px; letter-spacing: 0.02px;">40.0</span></div><svg class="ic" style="left:400.00px;top:862.00px;" width="40" height="80" viewBox="400 1020 40 80"><defs><linearGradient id="gab" x1="0" y1="0" x2="1" y2="1"><stop offset="0" stop-color="#b9b9b9"></stop><stop offset="0.55" stop-color="#6a6a6a"></stop><stop offset="1" stop-color="#a8a8a8"></stop></linearGradient></defs><path d="M418.2 1026.8 V1096" stroke="#a3c4f3" stroke-width="0.9" stroke-dasharray="6.6 4.4 1 3.9"></path><path d="M409 1038.2 C409.6 1045.5 413.5 1050.6 418 1050.6 C422 1050.4 425.8 1045.5 427.6 1039.6 L425 1039.4 C423.4 1043.4 421.4 1047 418.6 1047.2 C415.3 1047.4 413 1042.6 412.6 1038.2 Z" fill="url(#gab)" stroke="#ededed" stroke-width="0.8"></path></svg><div class="abs" style="left:882.00px;top:157.10px;width:26.00px;height:14.60px;background:#c4c4c4;"></div><svg class="ic" style="left:870.00px;top:142.00px;" width="40" height="40" viewBox="870 300 40 40"><defs><linearGradient id="gar" x1="0" y1="0" x2="0" y2="1"><stop offset="0" stop-color="#555"></stop><stop offset="0.45" stop-color="#8a8a8a"></stop><stop offset="1" stop-color="#9c9c9c"></stop></linearGradient></defs><path d="M875.2 321.6 L903 310" stroke="#8fb6ee" stroke-width="0.9" stroke-dasharray="0.8 4 5 6"></path><path d="M878.7 308.2 C884.3 309.6 886.6 314.6 886.3 320.4 C886 326 883 331 878.3 333 C880.8 328.6 881.9 324.6 881.8 320 C881.7 315.4 880.8 311.6 878.7 308.2 Z" fill="url(#gar)" stroke="#ececec" stroke-width="0.9"></path></svg><span class="t" style="top: 156.69px; font-size: 11px; line-height: 15px; color: rgb(0, 0, 0); left: 883.8px; letter-spacing: 0.02px;">40.0</span><div class="abs" style="left:453.00px;top:223.00px;width:113.00px;height:242.20px;border:4.3px solid #f80000;border-radius:8.5px;box-sizing:border-box;"></div><div class="abs" style="left:1110.00px;top:145.00px;width:122.00px;height:790.00px;overflow:hidden;"><div class="abs" style="left:24.20px;top:-5.90px;width:10.80px;height:10.80px;background:#e7e7e7;border-radius:2.5px;"></div><svg class="ic" width="16" height="14" style="left:24px;top:-9.5px"><path d="M2.5 9.4 L5.7 12.9 L13.5 2.7" fill="none" stroke="#ff8a0c" stroke-width="2.2" stroke-linejoin="miter"></path></svg><span class="t" style="top: -7.26px; font-size: 12.3px; line-height: 16px; color: rgb(64, 64, 64); left: 51.3px; -webkit-text-stroke: 0.3px rgb(64, 64, 64); letter-spacing: -0.406px;">CUT1</span><div class="abs" style="left:24.20px;top:16.10px;width:10.80px;height:10.80px;background:#e7e7e7;border-radius:2.5px;"></div><svg class="ic" width="16" height="14" style="left:24px;top:12.5px"><path d="M2.5 9.4 L5.7 12.9 L13.5 2.7" fill="none" stroke="#ff8a0c" stroke-width="2.2" stroke-linejoin="miter"></path></svg><span class="t" style="top: 14.74px; font-size: 12.3px; line-height: 16px; color: rgb(64, 64, 64); left: 51.3px; -webkit-text-stroke: 0.3px rgb(64, 64, 64); letter-spacing: -0.331px;">CUT2</span><div class="abs" style="left:24.20px;top:38.10px;width:10.80px;height:10.80px;background:#e7e7e7;border-radius:2.5px;"></div><svg class="ic" width="16" height="14" style="left:24px;top:34.5px"><path d="M2.5 9.4 L5.7 12.9 L13.5 2.7" fill="none" stroke="#ff8a0c" stroke-width="2.2" stroke-linejoin="miter"></path></svg><span class="t" style="top: 36.74px; font-size: 12.3px; line-height: 16px; color: rgb(64, 64, 64); left: 51.3px; -webkit-text-stroke: 0.3px rgb(64, 64, 64); letter-spacing: -0.866px;">PCUT1</span><div class="abs" style="left:24.20px;top:60.10px;width:10.80px;height:10.80px;background:#e7e7e7;border-radius:2.5px;"></div><svg class="ic" width="16" height="14" style="left:24px;top:56.5px"><path d="M2.5 9.4 L5.7 12.9 L13.5 2.7" fill="none" stroke="#ff8a0c" stroke-width="2.2" stroke-linejoin="miter"></path></svg><span class="t" style="top: 58.74px; font-size: 12.3px; line-height: 16px; color: rgb(64, 64, 64); left: 51.3px; -webkit-text-stroke: 0.3px rgb(64, 64, 64); letter-spacing: -0.466px;">PCUT2</span><div class="abs" style="left:24.20px;top:82.10px;width:10.80px;height:10.80px;background:#e7e7e7;border-radius:2.5px;"></div><svg class="ic" width="16" height="14" style="left:24px;top:78.5px"><path d="M2.5 9.4 L5.7 12.9 L13.5 2.7" fill="none" stroke="#ff8a0c" stroke-width="2.2" stroke-linejoin="miter"></path></svg><span class="t" style="top: 80.74px; font-size: 12.3px; line-height: 16px; color: rgb(64, 64, 64); left: 51.3px; -webkit-text-stroke: 0.3px rgb(64, 64, 64); letter-spacing: -0.583px;">SP3</span><div class="abs" style="left:24.20px;top:104.10px;width:10.80px;height:10.80px;background:#e7e7e7;border-radius:2.5px;"></div><svg class="ic" width="16" height="14" style="left:24px;top:100.5px"><path d="M2.5 9.4 L5.7 12.9 L13.5 2.7" fill="none" stroke="#ff8a0c" stroke-width="2.2" stroke-linejoin="miter"></path></svg><span class="t" style="top: 102.74px; font-size: 12.3px; line-height: 16px; color: rgb(64, 64, 64); left: 51.3px; -webkit-text-stroke: 0.3px rgb(64, 64, 64); letter-spacing: -0.417px;">SP4</span><div class="abs" style="left:24.20px;top:126.10px;width:10.80px;height:10.80px;background:#e7e7e7;border-radius:2.5px;"></div><svg class="ic" width="16" height="14" style="left:24px;top:122.5px"><path d="M2.5 9.4 L5.7 12.9 L13.5 2.7" fill="none" stroke="#ff8a0c" stroke-width="2.2" stroke-linejoin="miter"></path></svg><span class="t" style="top: 124.74px; font-size: 12.3px; line-height: 16px; color: rgb(64, 64, 64); left: 51.3px; -webkit-text-stroke: 0.3px rgb(64, 64, 64); letter-spacing: -0.466px;">PCUT3</span><div class="abs" style="left:24.20px;top:148.10px;width:10.80px;height:10.80px;background:#e7e7e7;border-radius:2.5px;"></div><svg class="ic" width="16" height="14" style="left:24px;top:144.5px"><path d="M2.5 9.4 L5.7 12.9 L13.5 2.7" fill="none" stroke="#ff8a0c" stroke-width="2.2" stroke-linejoin="miter"></path></svg><span class="t" style="top: 146.74px; font-size: 12.3px; line-height: 16px; color: rgb(64, 64, 64); left: 51.3px; -webkit-text-stroke: 0.3px rgb(64, 64, 64); letter-spacing: -0.466px;">PCUT4</span><div class="abs" style="left:24.20px;top:170.10px;width:10.80px;height:10.80px;background:#e7e7e7;border-radius:2.5px;"></div><svg class="ic" width="16" height="14" style="left:24px;top:166.5px"><path d="M2.5 9.4 L5.7 12.9 L13.5 2.7" fill="none" stroke="#ff8a0c" stroke-width="2.2" stroke-linejoin="miter"></path></svg><span class="t" style="top: 168.74px; font-size: 12.3px; line-height: 16px; color: rgb(64, 64, 64); left: 51.3px; -webkit-text-stroke: 0.3px rgb(64, 64, 64); letter-spacing: -0.466px;">PCUT5</span><div class="abs" style="left:24.20px;top:192.10px;width:10.80px;height:10.80px;background:#e7e7e7;border-radius:2.5px;"></div><svg class="ic" width="16" height="14" style="left:24px;top:188.5px"><path d="M2.5 9.4 L5.7 12.9 L13.5 2.7" fill="none" stroke="#ff8a0c" stroke-width="2.2" stroke-linejoin="miter"></path></svg><span class="t" style="top: 190.74px; font-size: 12.3px; line-height: 16px; color: rgb(64, 64, 64); left: 51.3px; -webkit-text-stroke: 0.3px rgb(64, 64, 64); letter-spacing: -0.466px;">PCUT6</span><div class="abs" style="left:24.20px;top:214.10px;width:10.80px;height:10.80px;background:#e7e7e7;border-radius:2.5px;"></div><svg class="ic" width="16" height="14" style="left:24px;top:210.5px"><path d="M2.5 9.4 L5.7 12.9 L13.5 2.7" fill="none" stroke="#ff8a0c" stroke-width="2.2" stroke-linejoin="miter"></path></svg><span class="t" style="top: 212.74px; font-size: 12.3px; line-height: 16px; color: rgb(64, 64, 64); left: 51.3px; -webkit-text-stroke: 0.3px rgb(64, 64, 64); letter-spacing: -0.466px;">PCUT7</span><div class="abs" style="left:24.20px;top:236.10px;width:10.80px;height:10.80px;background:#e7e7e7;border-radius:2.5px;"></div><svg class="ic" width="16" height="14" style="left:24px;top:232.5px"><path d="M2.5 9.4 L5.7 12.9 L13.5 2.7" fill="none" stroke="#ff8a0c" stroke-width="2.2" stroke-linejoin="miter"></path></svg><span class="t" style="top: 234.74px; font-size: 12.3px; line-height: 16px; color: rgb(64, 64, 64); left: 51.3px; -webkit-text-stroke: 0.3px rgb(64, 64, 64); letter-spacing: -0.583px;">SP5</span><div class="abs" style="left:24.20px;top:258.10px;width:10.80px;height:10.80px;background:#e7e7e7;border-radius:2.5px;"></div><svg class="ic" width="16" height="14" style="left:24px;top:254.5px"><path d="M2.5 9.4 L5.7 12.9 L13.5 2.7" fill="none" stroke="#ff8a0c" stroke-width="2.2" stroke-linejoin="miter"></path></svg><span class="t" style="top: 256.74px; font-size: 12.3px; line-height: 16px; color: rgb(64, 64, 64); left: 51.3px; -webkit-text-stroke: 0.3px rgb(64, 64, 64); letter-spacing: -0.609px;">PCUT12</span><div class="abs" style="left:24.20px;top:280.10px;width:10.80px;height:10.80px;background:#e7e7e7;border-radius:2.5px;"></div><svg class="ic" width="16" height="14" style="left:24px;top:276.5px"><path d="M2.5 9.4 L5.7 12.9 L13.5 2.7" fill="none" stroke="#ff8a0c" stroke-width="2.2" stroke-linejoin="miter"></path></svg><span class="t" style="top: 278.74px; font-size: 12.3px; line-height: 16px; color: rgb(64, 64, 64); left: 51.3px; -webkit-text-stroke: 0.3px rgb(64, 64, 64); letter-spacing: -0.609px;">PCUT13</span><div class="abs" style="left:24.20px;top:302.10px;width:10.80px;height:10.80px;background:#e7e7e7;border-radius:2.5px;"></div><svg class="ic" width="16" height="14" style="left:24px;top:298.5px"><path d="M2.5 9.4 L5.7 12.9 L13.5 2.7" fill="none" stroke="#ff8a0c" stroke-width="2.2" stroke-linejoin="miter"></path></svg><span class="t" style="top: 300.74px; font-size: 12.3px; line-height: 16px; color: rgb(64, 64, 64); left: 51.3px; -webkit-text-stroke: 0.3px rgb(64, 64, 64); letter-spacing: -0.609px;">PCUT15</span><div class="abs" style="left:24.20px;top:324.10px;width:10.80px;height:10.80px;background:#e7e7e7;border-radius:2.5px;"></div><svg class="ic" width="16" height="14" style="left:24px;top:320.5px"><path d="M2.5 9.4 L5.7 12.9 L13.5 2.7" fill="none" stroke="#ff8a0c" stroke-width="2.2" stroke-linejoin="miter"></path></svg><span class="t" style="top: 322.74px; font-size: 12.3px; line-height: 16px; color: rgb(64, 64, 64); left: 51.3px; -webkit-text-stroke: 0.3px rgb(64, 64, 64); letter-spacing: -0.609px;">PCUT16</span><div class="abs" style="left:24.20px;top:346.10px;width:10.80px;height:10.80px;background:#e7e7e7;border-radius:2.5px;"></div><svg class="ic" width="16" height="14" style="left:24px;top:342.5px"><path d="M2.5 9.4 L5.7 12.9 L13.5 2.7" fill="none" stroke="#ff8a0c" stroke-width="2.2" stroke-linejoin="miter"></path></svg><span class="t" style="top: 344.74px; font-size: 12.3px; line-height: 16px; color: rgb(64, 64, 64); left: 51.3px; -webkit-text-stroke: 0.3px rgb(64, 64, 64); letter-spacing: 0.392px;">Weld1</span><div class="abs" style="left:24.20px;top:368.10px;width:10.80px;height:10.80px;background:#e7e7e7;border-radius:2.5px;"></div><svg class="ic" width="16" height="14" style="left:24px;top:364.5px"><path d="M2.5 9.4 L5.7 12.9 L13.5 2.7" fill="none" stroke="#ff8a0c" stroke-width="2.2" stroke-linejoin="miter"></path></svg><span class="t" style="top: 366.74px; font-size: 12.3px; line-height: 16px; color: rgb(64, 64, 64); left: 51.3px; -webkit-text-stroke: 0.3px rgb(64, 64, 64); letter-spacing: -0.583px;">SP6</span><div class="abs" style="left:24.20px;top:390.10px;width:10.80px;height:10.80px;background:#e7e7e7;border-radius:2.5px;"></div><svg class="ic" width="16" height="14" style="left:24px;top:386.5px"><path d="M2.5 9.4 L5.7 12.9 L13.5 2.7" fill="none" stroke="#ff8a0c" stroke-width="2.2" stroke-linejoin="miter"></path></svg><span class="t" style="top: 388.74px; font-size: 12.3px; line-height: 16px; color: rgb(64, 64, 64); left: 51.3px; -webkit-text-stroke: 0.3px rgb(64, 64, 64); letter-spacing: -0.609px;">PCUT14</span><div class="abs" style="left:24.20px;top:412.10px;width:10.80px;height:10.80px;background:#e7e7e7;border-radius:2.5px;"></div><svg class="ic" width="16" height="14" style="left:24px;top:408.5px"><path d="M2.5 9.4 L5.7 12.9 L13.5 2.7" fill="none" stroke="#ff8a0c" stroke-width="2.2" stroke-linejoin="miter"></path></svg><span class="t" style="top: 410.74px; font-size: 12.3px; line-height: 16px; color: rgb(64, 64, 64); left: 51.3px; -webkit-text-stroke: 0.3px rgb(64, 64, 64); letter-spacing: -0.609px;">PCUT17</span><div class="abs" style="left:24.20px;top:434.10px;width:10.80px;height:10.80px;background:#e7e7e7;border-radius:2.5px;"></div><svg class="ic" width="16" height="14" style="left:24px;top:430.5px"><path d="M2.5 9.4 L5.7 12.9 L13.5 2.7" fill="none" stroke="#ff8a0c" stroke-width="2.2" stroke-linejoin="miter"></path></svg><span class="t" style="top: 432.74px; font-size: 12.3px; line-height: 16px; color: rgb(64, 64, 64); left: 51.3px; -webkit-text-stroke: 0.3px rgb(64, 64, 64); letter-spacing: -0.609px;">PCUT18</span><div class="abs" style="left:24.20px;top:456.10px;width:10.80px;height:10.80px;background:#e7e7e7;border-radius:2.5px;"></div><svg class="ic" width="16" height="14" style="left:24px;top:452.5px"><path d="M2.5 9.4 L5.7 12.9 L13.5 2.7" fill="none" stroke="#ff8a0c" stroke-width="2.2" stroke-linejoin="miter"></path></svg><span class="t" style="top: 454.74px; font-size: 12.3px; line-height: 16px; color: rgb(64, 64, 64); left: 51.3px; -webkit-text-stroke: 0.3px rgb(64, 64, 64); letter-spacing: -0.609px;">PCUT19</span><div class="abs" style="left:24.20px;top:478.10px;width:10.80px;height:10.80px;background:#e7e7e7;border-radius:2.5px;"></div><svg class="ic" width="16" height="14" style="left:24px;top:474.5px"><path d="M2.5 9.4 L5.7 12.9 L13.5 2.7" fill="none" stroke="#ff8a0c" stroke-width="2.2" stroke-linejoin="miter"></path></svg><span class="t" style="top: 476.74px; font-size: 12.3px; line-height: 16px; color: rgb(64, 64, 64); left: 51.3px; -webkit-text-stroke: 0.3px rgb(64, 64, 64); letter-spacing: 0.392px;">Weld2</span><div class="abs" style="left:24.20px;top:500.10px;width:10.80px;height:10.80px;background:#e7e7e7;border-radius:2.5px;"></div><svg class="ic" width="16" height="14" style="left:24px;top:496.5px"><path d="M2.5 9.4 L5.7 12.9 L13.5 2.7" fill="none" stroke="#ff8a0c" stroke-width="2.2" stroke-linejoin="miter"></path></svg><span class="t" style="top: 498.74px; font-size: 12.3px; line-height: 16px; color: rgb(64, 64, 64); left: 51.3px; -webkit-text-stroke: 0.3px rgb(64, 64, 64); letter-spacing: -0.917px;">STIFF1</span><div class="abs" style="left:24.20px;top:522.10px;width:10.80px;height:10.80px;background:#e7e7e7;border-radius:2.5px;"></div><svg class="ic" width="16" height="14" style="left:24px;top:518.5px"><path d="M2.5 9.4 L5.7 12.9 L13.5 2.7" fill="none" stroke="#ff8a0c" stroke-width="2.2" stroke-linejoin="miter"></path></svg><span class="t" style="top: 520.74px; font-size: 12.3px; line-height: 16px; color: rgb(64, 64, 64); left: 51.3px; -webkit-text-stroke: 0.3px rgb(64, 64, 64); letter-spacing: -0.443px;">PCUT20</span><div class="abs" style="left:24.20px;top:544.10px;width:10.80px;height:10.80px;background:#e7e7e7;border-radius:2.5px;"></div><svg class="ic" width="16" height="14" style="left:24px;top:540.5px"><path d="M2.5 9.4 L5.7 12.9 L13.5 2.7" fill="none" stroke="#ff8a0c" stroke-width="2.2" stroke-linejoin="miter"></path></svg><span class="t" style="top: 542.74px; font-size: 12.3px; line-height: 16px; color: rgb(64, 64, 64); left: 51.3px; -webkit-text-stroke: 0.3px rgb(64, 64, 64); letter-spacing: -0.609px;">PCUT21</span><div class="abs" style="left:24.20px;top:566.10px;width:10.80px;height:10.80px;background:#e7e7e7;border-radius:2.5px;"></div><svg class="ic" width="16" height="14" style="left:24px;top:562.5px"><path d="M2.5 9.4 L5.7 12.9 L13.5 2.7" fill="none" stroke="#ff8a0c" stroke-width="2.2" stroke-linejoin="miter"></path></svg><span class="t" style="top: 564.74px; font-size: 12.3px; line-height: 16px; color: rgb(64, 64, 64); left: 51.3px; -webkit-text-stroke: 0.3px rgb(64, 64, 64); letter-spacing: 0.392px;">Weld3</span><div class="abs" style="left:24.20px;top:588.10px;width:10.80px;height:10.80px;background:#e7e7e7;border-radius:2.5px;"></div><svg class="ic" width="16" height="14" style="left:24px;top:584.5px"><path d="M2.5 9.4 L5.7 12.9 L13.5 2.7" fill="none" stroke="#ff8a0c" stroke-width="2.2" stroke-linejoin="miter"></path></svg><span class="t" style="top: 586.74px; font-size: 12.3px; line-height: 16px; color: rgb(64, 64, 64); left: 51.3px; -webkit-text-stroke: 0.3px rgb(64, 64, 64); letter-spacing: 0.392px;">Weld4</span><svg class="ic" width="104" height="22" style="left:14px;top:605.2px"><path d="M0 0 H88 L103.2 10.4 L88 20.8 H0 Z" fill="#f26f21"></path></svg><div class="abs" style="left:24.20px;top:610.10px;width:10.80px;height:10.80px;background:#e7e7e7;border-radius:2.5px;"></div><svg class="ic" width="16" height="14" style="left:24px;top:606.5px"><path d="M2.5 9.4 L5.7 12.9 L13.5 2.7" fill="none" stroke="#ff8a0c" stroke-width="2.2" stroke-linejoin="miter"></path></svg><span class="t" style="top: 608.74px; font-size: 12.3px; line-height: 16px; color: rgb(255, 255, 255); font-weight: 700; left: 51.3px; letter-spacing: 0.16px;">Weld5</span><div class="abs" style="left:24.20px;top:632.10px;width:10.80px;height:10.80px;background:#e7e7e7;border-radius:2.5px;"></div><svg class="ic" width="16" height="14" style="left:24px;top:628.5px"><path d="M2.5 9.4 L5.7 12.9 L13.5 2.7" fill="none" stroke="#ff8a0c" stroke-width="2.2" stroke-linejoin="miter"></path></svg><span class="t" style="top: 630.74px; font-size: 12.3px; line-height: 16px; color: rgb(64, 64, 64); left: 51.3px; -webkit-text-stroke: 0.3px rgb(64, 64, 64); letter-spacing: 0.392px;">Weld6</span><div class="abs" style="left:24.20px;top:654.10px;width:10.80px;height:10.80px;background:#e7e7e7;border-radius:2.5px;"></div><svg class="ic" width="16" height="14" style="left:24px;top:650.5px"><path d="M2.5 9.4 L5.7 12.9 L13.5 2.7" fill="none" stroke="#ff8a0c" stroke-width="2.2" stroke-linejoin="miter"></path></svg><span class="t" style="top: 652.74px; font-size: 12.3px; line-height: 16px; color: rgb(64, 64, 64); left: 51.3px; -webkit-text-stroke: 0.3px rgb(64, 64, 64); letter-spacing: 0.392px;">Weld7</span><div class="abs" style="left:24.20px;top:676.10px;width:10.80px;height:10.80px;background:#e7e7e7;border-radius:2.5px;"></div><svg class="ic" width="16" height="14" style="left:24px;top:672.5px"><path d="M2.5 9.4 L5.7 12.9 L13.5 2.7" fill="none" stroke="#ff8a0c" stroke-width="2.2" stroke-linejoin="miter"></path></svg><span class="t" style="top: 674.74px; font-size: 12.3px; line-height: 16px; color: rgb(64, 64, 64); left: 51.3px; -webkit-text-stroke: 0.3px rgb(64, 64, 64); letter-spacing: 0.392px;">Weld8</span><div class="abs" style="left:24.20px;top:698.10px;width:10.80px;height:10.80px;background:#e7e7e7;border-radius:2.5px;"></div><svg class="ic" width="16" height="14" style="left:24px;top:694.5px"><path d="M2.5 9.4 L5.7 12.9 L13.5 2.7" fill="none" stroke="#ff8a0c" stroke-width="2.2" stroke-linejoin="miter"></path></svg><span class="t" style="top: 696.74px; font-size: 12.3px; line-height: 16px; color: rgb(64, 64, 64); left: 51.3px; -webkit-text-stroke: 0.3px rgb(64, 64, 64); letter-spacing: 0.392px;">Weld9</span><div class="abs" style="left:24.20px;top:720.10px;width:10.80px;height:10.80px;background:#e7e7e7;border-radius:2.5px;"></div><svg class="ic" width="16" height="14" style="left:24px;top:716.5px"><path d="M2.5 9.4 L5.7 12.9 L13.5 2.7" fill="none" stroke="#ff8a0c" stroke-width="2.2" stroke-linejoin="miter"></path></svg><span class="t" style="top: 718.74px; font-size: 12.3px; line-height: 16px; color: rgb(64, 64, 64); left: 51.3px; -webkit-text-stroke: 0.3px rgb(64, 64, 64); letter-spacing: 0.136px;">Weld10</span><div class="abs" style="left:24.20px;top:742.10px;width:10.80px;height:10.80px;background:#e7e7e7;border-radius:2.5px;"></div><svg class="ic" width="16" height="14" style="left:24px;top:738.5px"><path d="M2.5 9.4 L5.7 12.9 L13.5 2.7" fill="none" stroke="#ff8a0c" stroke-width="2.2" stroke-linejoin="miter"></path></svg><span class="t" style="top: 740.74px; font-size: 12.3px; line-height: 16px; color: rgb(64, 64, 64); left: 51.3px; -webkit-text-stroke: 0.3px rgb(64, 64, 64); letter-spacing: -0.06px;">Weld11</span><div class="abs" style="left:24.20px;top:764.10px;width:10.80px;height:10.80px;background:#e7e7e7;border-radius:2.5px;"></div><svg class="ic" width="16" height="14" style="left:24px;top:760.5px"><path d="M2.5 9.4 L5.7 12.9 L13.5 2.7" fill="none" stroke="#ff8a0c" stroke-width="2.2" stroke-linejoin="miter"></path></svg><span class="t" style="top: 762.74px; font-size: 12.3px; line-height: 16px; color: rgb(64, 64, 64); left: 51.3px; -webkit-text-stroke: 0.3px rgb(64, 64, 64); letter-spacing: 0.103px;">Weld12</span></div><div class="abs" style="left:1231.00px;top:145.00px;width:9.80px;height:781.00px;background:#f0f0f0;"></div><div class="abs" style="left:1232.00px;top:337.00px;width:8.00px;height:589.00px;background:#d2d2d2;border-radius:2px;"></div><div class="abs" style="left:1116.20px;top:741.80px;width:117.00px;height:37.20px;border:4.4px solid #f80000;border-radius:8px;box-sizing:border-box;"></div></div><div id="panel" class="abs" style="left:1265px;top:158px;width:655px;height:962px;background:#fff"><div class="abs" style="left:0.00px;top:0.00px;width:655.00px;height:25.00px;background:#f26f21;"><span class="t" style="top: 4.54px; font-size: 12px; line-height: 16px; color: rgb(255, 255, 255); font-weight: 700; left: 10px; letter-spacing: 0.035px;">Weld5</span><span class="t" style="top: 4.54px; font-size: 12px; line-height: 16px; color: rgb(255, 255, 255); left: 56.7px; letter-spacing: -0.056px;">[General weld or contact]</span><span class="t" style="top: 4.54px; font-size: 12px; line-height: 16px; color: rgb(255, 255, 255); font-weight: 700; left: 570.8px; letter-spacing: -0.75px;">Copy</span><span class="t" style="top: 4.54px; font-size: 12px; line-height: 16px; color: rgb(255, 255, 255); font-weight: 700; left: 608.6px; letter-spacing: 0.228px;">Delete</span></div><svg class="ic" width="10" height="8" style="left:7.5px;top:36.19999999999999px"><path d="M0 0 H9.6 L4.8 7.2 Z" fill="#f26f21"></path></svg><span class="t" style="top: 31.15px; font-size: 14px; line-height: 18px; color: rgb(242, 111, 33); font-weight: 700; left: 34.3px; letter-spacing: 0.056px;">General weld or contact</span><span class="t" style="top: 58.84px; font-size: 12px; line-height: 16px; color: rgb(17, 17, 17); left: 34.5px; letter-spacing: -0.134px;">Placement</span><div class="abs" style="left:133.00px;top:55.00px;width:521.00px;height:22.00px;background:#e5e5e5;"><span class="t" style="top: 2.84px; font-size: 12px; line-height: 16px; color: rgb(0, 0, 0); left: 6.2px; letter-spacing: -0.204px;">Edge to surface</span></div><svg class="ic" width="7" height="5" style="left:642px;top:63px"><path d="M0 0 H7 L3.5 5 Z" fill="#000"></path></svg><span class="t" style="top: 83.04px; font-size: 12px; line-height: 16px; color: rgb(17, 17, 17); left: 34.5px; letter-spacing: -0.429px;">Type</span><div class="abs" style="left:133.00px;top:79.00px;width:521.00px;height:22.00px;background:#e5e5e5;"><span class="t" style="top: 2.84px; font-size: 12px; line-height: 16px; color: rgb(0, 0, 0); left: 6.2px; letter-spacing: -0.031px;">Weld</span></div><svg class="ic" width="7" height="5" style="left:642px;top:87px"><path d="M0 0 H7 L3.5 5 Z" fill="#000"></path></svg><svg class="ic" width="10" height="8" style="left:7.5px;top:113.19999999999999px"><path d="M0 0 H9.6 L4.8 7.2 Z" fill="#f26f21"></path></svg><span class="t" style="top: 108.15px; font-size: 14px; line-height: 18px; color: rgb(242, 111, 33); font-weight: 700; left: 34.3px; letter-spacing: -0.155px;">First plate</span><span class="t" style="top: 135.64px; font-size: 12px; line-height: 16px; color: rgb(17, 17, 17); left: 34.5px; letter-spacing: 0.028px;">Member or plate</span><div class="abs" style="left:132.00px;top:132.00px;width:448.00px;height:24.00px;background:#e5e5e5;"><span class="t" style="top: 2.84px; font-size: 12px; line-height: 16px; color: rgb(0, 0, 0); left: 6px; letter-spacing: -0.984px;">STIFF1b</span></div><svg class="ic" width="7" height="5" style="left:568px;top:142px"><path d="M0 0 H7 L3.5 5 Z" fill="#000"></path></svg><svg class="ic" style="left:584.00px;top:136.00px;" width="22" height="16" viewBox="1849 294 22 16"><path d="M1853 297.2 H1867 M1853 306.8 H1867" stroke="#111" stroke-width="2"></path><path d="M1853 299 H1867 M1853 305 H1867" stroke="#888" stroke-width="0.8"></path><path d="M1850.6 302 H1854.5 M1865.5 302 H1869.6" stroke="#333" stroke-width="0.9"></path><path d="M1852.3 300.6 L1854.3 302 L1852.3 303.4 M1867.7 300.6 L1865.7 302 L1867.7 303.4" stroke="#333" stroke-width="0.7" fill="none"></path></svg><div class="abs" style="left:610.00px;top:134.00px;width:20.00px;height:20.00px;background:#f26f21;"><i style="position:absolute;left:4.8px;top:2.4px;width:10.6px;height:15.2px;background:#fff;border:1px solid #444;box-sizing:border-box"></i><i style="position:absolute;left:6px;top:3.9px;width:1.6px;height:1.6px;background:#7a1d00"></i><i style="position:absolute;left:12.2px;top:3.9px;width:1.6px;height:1.6px;background:#7a1d00"></i><i style="position:absolute;left:6px;top:14.4px;width:1.6px;height:1.6px;background:#7a1d00"></i><i style="position:absolute;left:12.2px;top:14.4px;width:1.6px;height:1.6px;background:#7a1d00"></i></div><div class="abs" style="left:632.00px;top:132.00px;width:22.00px;height:24.00px;background:#999;"><svg width="22" height="24" style="position:absolute;left:0;top:0"><path d="M5.6 3.6 V17.8 L9 14.6 L11.4 20 L13.6 19 L11.2 13.8 L15.8 13.6 Z" fill="#fff"></path></svg></div><span class="t" style="top: 161.64px; font-size: 12px; line-height: 16px; color: rgb(17, 17, 17); left: 34.5px; letter-spacing: -0.141px;">Local edge index</span><div class="abs" style="left:132.00px;top:158.00px;width:522.00px;height:22.00px;background:#f2f2f2;"><span class="t" style="top:3.14px;font-size:12px;line-height:16px;color:#111;left:5.00px;">1</span></div><svg class="ic" width="10" height="8" style="left:7.5px;top:192.2px"><path d="M0 0 H9.6 L4.8 7.2 Z" fill="#f26f21"></path></svg><span class="t" style="top: 187.15px; font-size: 14px; line-height: 18px; color: rgb(242, 111, 33); font-weight: 700; left: 34.3px; letter-spacing: -0.078px;">Second plate</span><span class="t" style="top: 214.84px; font-size: 12px; line-height: 16px; color: rgb(17, 17, 17); left: 34.5px; letter-spacing: -0.312px;">Plate</span><div class="abs" style="left:132.00px;top:211.00px;width:448.00px;height:24.00px;background:#e5e5e5;"><span class="t" style="top: 2.84px; font-size: 12px; line-height: 16px; color: rgb(0, 0, 0); left: 6px; letter-spacing: -1.2px;">SP5</span></div><svg class="ic" width="7" height="5" style="left:568px;top:221px"><path d="M0 0 H7 L3.5 5 Z" fill="#000"></path></svg><svg class="ic" style="left:584.00px;top:215.00px;" width="22" height="16" viewBox="1849 294 22 16"><path d="M1853 297.2 H1867 M1853 306.8 H1867" stroke="#111" stroke-width="2"></path><path d="M1853 299 H1867 M1853 305 H1867" stroke="#888" stroke-width="0.8"></path><path d="M1850.6 302 H1854.5 M1865.5 302 H1869.6" stroke="#333" stroke-width="0.9"></path><path d="M1852.3 300.6 L1854.3 302 L1852.3 303.4 M1867.7 300.6 L1865.7 302 L1867.7 303.4" stroke="#333" stroke-width="0.7" fill="none"></path></svg><div class="abs" style="left:610.00px;top:213.00px;width:20.00px;height:20.00px;background:#f26f21;"><i style="position:absolute;left:4.8px;top:2.4px;width:10.6px;height:15.2px;background:#fff;border:1px solid #444;box-sizing:border-box"></i><i style="position:absolute;left:6px;top:3.9px;width:1.6px;height:1.6px;background:#7a1d00"></i><i style="position:absolute;left:12.2px;top:3.9px;width:1.6px;height:1.6px;background:#7a1d00"></i><i style="position:absolute;left:6px;top:14.4px;width:1.6px;height:1.6px;background:#7a1d00"></i><i style="position:absolute;left:12.2px;top:14.4px;width:1.6px;height:1.6px;background:#7a1d00"></i></div><div class="abs" style="left:632.00px;top:211.00px;width:22.00px;height:24.00px;background:#999;"><svg width="22" height="24" style="position:absolute;left:0;top:0"><path d="M5.6 3.6 V17.8 L9 14.6 L11.4 20 L13.6 19 L11.2 13.8 L15.8 13.6 Z" fill="#fff"></path></svg></div><svg class="ic" width="10" height="8" style="left:7.5px;top:247.5px"><path d="M0 0 H9.6 L4.8 7.2 Z" fill="#f26f21"></path></svg><span class="t" style="top: 242.45px; font-size: 14px; line-height: 18px; color: rgb(242, 111, 33); font-weight: 700; left: 34.3px; letter-spacing: -0.057px;">Welds</span><span class="t" style="top: 269.84px; font-size: 12px; line-height: 16px; color: rgb(17, 17, 17); left: 34.5px; letter-spacing: 0.353px;">Weld [mm]</span><span class="t" style="top: 267.14px; font-size: 12px; line-height: 16px; color: rgb(85, 85, 85); left: 133px; letter-spacing: -0.563px;">4.0</span><div class="abs" style="left:159.00px;top:266.00px;width:22.00px;height:22.00px;background:#969696;"><svg width="22" height="22" style="position:absolute;left:0;top:0"><path d="M8 8.6 L11 5 L14 8.6 Z M8 13.8 L11 17.4 L14 13.8 Z" fill="#e8e8e8"></path></svg></div><div class="abs" style="left:181.00px;top:266.00px;width:326.00px;height:22.00px;background:#e5e5e5;"><span class="t" style="top: 2.84px; font-size: 12px; line-height: 16px; color: rgb(0, 0, 0); left: 6px; letter-spacing: -0.812px;">S 355</span></div><svg class="ic" width="7" height="5" style="left:495px;top:274px"><path d="M0 0 H7 L3.5 5 Z" fill="#000"></path></svg><div class="abs" style="left:507.00px;top:266.00px;width:22.00px;height:22.00px;background:#999;"><i style="position:absolute;left:9px;top:3.2px;width:4.2px;height:16px;background:#fff"></i><i style="position:absolute;left:3px;top:9.1px;width:16.3px;height:4.2px;background:#fff"></i></div><svg class="ic" style="left:531.00px;top:265.00px;" width="124" height="24" viewBox="1796 423 124 24"><rect x="1800.4" y="439.4" width="15.2" height="3.4" fill="#fff" stroke="#555" stroke-width="0.8"></rect><rect x="1806.3" y="427.4" width="3.5" height="12" fill="#fff" stroke="#555" stroke-width="0.8"></rect><path d="M1800.2 439.2 H1806.2 V433 Z" fill="#000"></path><rect x="1825.4" y="439.4" width="15.2" height="3.4" fill="#fff" stroke="#555" stroke-width="0.8"></rect><rect x="1831.3" y="427.4" width="3.5" height="12" fill="#fff" stroke="#555" stroke-width="0.8"></rect><path d="M1840.8 439.2 H1834.9 V433 Z" fill="#000"></path><rect x="1848" y="425" width="20" height="20" fill="#f26f21"></rect><rect x="1850.4" y="439.4" width="15.2" height="3.4" fill="#fff" stroke="#555" stroke-width="0.8"></rect><rect x="1856.3" y="427.4" width="3.5" height="12" fill="#fff" stroke="#555" stroke-width="0.8"></rect><path d="M1850.2 439.2 H1856.2 V433 Z" fill="#000"></path><path d="M1865.8 439.2 H1859.9 V433 Z" fill="#000"></path><rect x="1875.4" y="439.4" width="15.2" height="3.4" fill="#fff" stroke="#555" stroke-width="0.8"></rect><rect x="1881.3" y="427.4" width="3.5" height="12" fill="#fff" stroke="#555" stroke-width="0.8"></rect><path d="M1881.4 439.2 H1884.8 V434.6 Z" fill="#000"></path><rect x="1900.4" y="439.4" width="15.2" height="3.4" fill="#fff" stroke="#555" stroke-width="0.8"></rect><rect x="1906.3" y="427.4" width="3.5" height="12" fill="#fff" stroke="#555" stroke-width="0.8"></rect></svg><span class="t" style="top: 293.64px; font-size: 12px; line-height: 16px; color: rgb(17, 17, 17); left: 34.5px; letter-spacing: -0.429px;">Type</span><div class="abs" style="left:133.00px;top:290.00px;width:521.00px;height:22.00px;background:#e5e5e5;"><span class="t" style="top: 2.84px; font-size: 12px; line-height: 16px; color: rgb(0, 0, 0); left: 6.2px; letter-spacing: 0.128px;">Continuous</span></div><svg class="ic" width="7" height="5" style="left:642px;top:298px"><path d="M0 0 H7 L3.5 5 Z" fill="#000"></path></svg></div><div class="abs" style="left:1259.00px;top:158.00px;width:6.00px;height:962.00px;background:#cbcbcb;border-left:1px solid #bcbcbc;border-right:1px solid #bcbcbc;box-sizing:border-box;"></div><div id="status" class="abs" style="left:0;top:1120px;width:1920px;height:32px"><svg class="tex" width="1920" height="32" style="left:0;top:0"><rect width="1920" height="32" fill="url(#hg)"></rect><g mask="url(#hm)"><rect width="1920" height="32" filter="url(#brush)"></rect></g></svg><span class="t" style="top: 10.04px; font-size: 12px; line-height: 16px; color: rgb(141, 141, 141); font-weight: 700; left: 23.3px; letter-spacing: -0.388px;">Design code:</span><span class="t" style="top: 10.04px; font-size: 12px; line-height: 16px; color: rgb(255, 255, 255); font-weight: 700; left: 99px; letter-spacing: -0.986px;">EN</span><span class="t" style="top: 10.04px; font-size: 12px; line-height: 16px; color: rgb(141, 141, 141); font-weight: 700; left: 134px; letter-spacing: -0.851px;">Analysis:</span><span class="t" style="top: 10.04px; font-size: 12px; line-height: 16px; color: rgb(255, 255, 255); font-weight: 700; left: 184.8px; letter-spacing: -0.346px;">Stress, strain</span><span class="t" style="top: 10.04px; font-size: 12px; line-height: 16px; color: rgb(141, 141, 141); font-weight: 700; left: 276.3px; letter-spacing: -0.276px;">Load effects:</span><span class="t" style="top: 10.04px; font-size: 12px; line-height: 16px; color: rgb(255, 255, 255); font-weight: 700; left: 353px; letter-spacing: -0.155px;">In equilibrium</span><span class="t" style="top: 10.04px; font-size: 12px; line-height: 16px; color: rgb(141, 141, 141); font-weight: 700; left: 450px; letter-spacing: -0.333px;">Units:</span><span class="t" style="top: 10.04px; font-size: 12px; line-height: 16px; color: rgb(255, 255, 255); font-weight: 700; left: 490px; letter-spacing: 0.078px;">mm</span><span class="t" style="left: 1796.9px; top: 11px; font-size: 13px; line-height: 16px; color: rgb(255, 255, 255); letter-spacing: -0.463px;"><span style="color:#f26f21">www.</span>ideastatica<span style="color:#f26f21">.com</span></span></div></body></html>
